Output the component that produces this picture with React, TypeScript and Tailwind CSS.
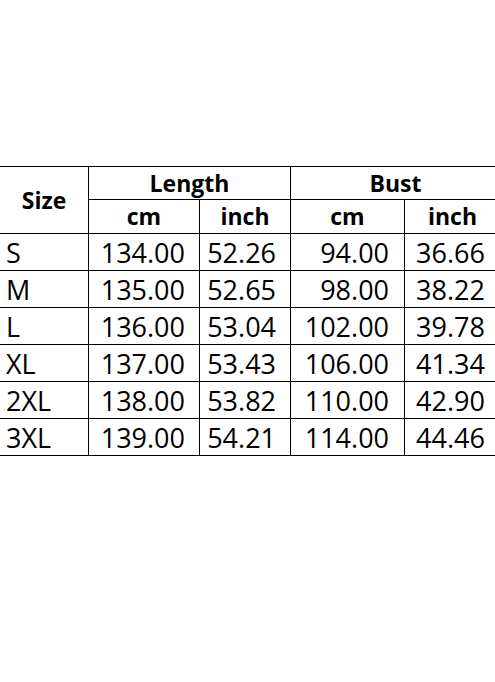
const rows = [
  ['S', '134.00', '52.26', '94.00', '36.66'],
  ['M', '135.00', '52.65', '98.00', '38.22'],
  ['L', '136.00', '53.04', '102.00', '39.78'],
  ['XL', '137.00', '53.43', '106.00', '41.34'],
  ['2XL', '138.00', '53.82', '110.00', '42.90'],
  ['3XL', '139.00', '54.21', '114.00', '44.46'],
];

const cell = 'border border-black p-0';

export default function App() {
  return (
    <div className="w-[495px] h-[682px] overflow-hidden bg-white pt-[166px] text-black font-['Open_Sans',sans-serif]">
      <table className="table-fixed border-collapse ml-[-1px] w-[501px]">
        <colgroup>
          <col className="w-[89px]" />
          <col className="w-[111px]" />
          <col className="w-[91px]" />
          <col className="w-[114px]" />
          <col className="w-[96px]" />
        </colgroup>
        <thead className="text-[23px] font-bold leading-none">
          <tr className="h-[33px]">
            <th rowSpan={2} className={`${cell} text-center`}>Size</th>
            <th colSpan={2} className={`${cell} text-center`}>Length</th>
            <th colSpan={2} className={`${cell} text-center`}>Bust</th>
          </tr>
          <tr className="h-[34px]">
            <th className={`${cell} text-center`}>cm</th>
            <th className={`${cell} text-center`}>inch</th>
            <th className={`${cell} text-center`}>cm</th>
            <th className={`${cell} text-center`}>inch</th>
          </tr>
        </thead>
        <tbody className="text-[27px] leading-none">
          {rows.map((r) => (
            <tr key={r[0]} className="h-[37px]">
              <td className={`${cell} text-left pl-[6px]`}>{r[0]}</td>
              <td className={`${cell} text-right pr-[14px]`}>{r[1]}</td>
              <td className={`${cell} text-right pr-[14px]`}>{r[2]}</td>
              <td className={`${cell} text-right pr-[15px]`}>{r[3]}</td>
              <td className={`${cell} text-left pl-[11px]`}>{r[4]}</td>
            </tr>
          ))}
        </tbody>
      </table>
    </div>
  );
}
